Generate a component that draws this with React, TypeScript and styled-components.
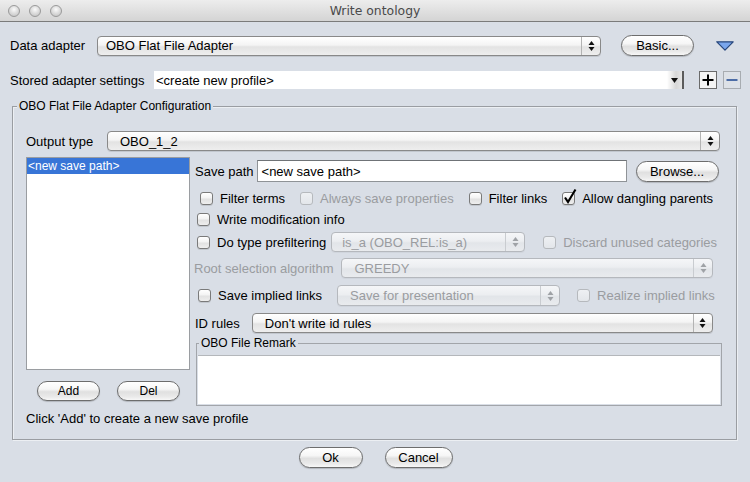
import React from 'react';
import styled, { createGlobalStyle } from 'styled-components';

const BG = '#d9dee6';

const Global = createGlobalStyle`
  html, body { margin: 0; padding: 0; background: ${BG}; }
  body { font-family: "Liberation Sans", Arial, sans-serif; font-size: 13px; }
`;

const Window = styled.div`
  width: 750px;
  height: 482px;
  background: ${BG};
  overflow: hidden;
  display: flex;
  flex-direction: column;
  color: #000;
  font-family: "Liberation Sans", Arial, sans-serif;
  font-size: 13px;
`;

const TitleBar = styled.div`
  flex: none;
  height: 21px;
  border-bottom: 1px solid #7b7b7b;
  background: linear-gradient(#ededed, #d4d4d4);
  display: grid;
  grid-template-columns: 1fr auto 1fr;
  align-items: center;
`;

const Lights = styled.div`
  display: flex;
  gap: 9px;
  padding-left: 8px;
`;

const Light = styled.span`
  width: 12px;
  height: 12px;
  box-sizing: border-box;
  border-radius: 50%;
  border: 1px solid #9a9a9a;
  background: radial-gradient(circle at 50% 35%, #fbfbfb 0%, #dedede 45%, #bdbdbd 100%);
`;

const Title = styled.div`
  font-family: "DejaVu Sans", sans-serif;
  font-size: 12.4px;
  color: #4a4a4a;
`;

const Row = styled.div<{ $mt: number; $h: number; $pl?: number }>`
  flex: none;
  display: flex;
  align-items: center;
  margin-top: ${p => p.$mt}px;
  height: ${p => p.$h}px;
  padding-left: ${p => p.$pl ?? 0}px;
`;

const Label = styled.span<{ $w?: number; $disabled?: boolean }>`
  flex: none;
  white-space: nowrap;
  ${p => (p.$w ? `width: ${p.$w}px;` : '')}
  color: ${p => (p.$disabled ? '#9a9ca0' : '#000')};
`;

const ComboBox = styled.div<{ $w?: number; $ml?: number; $mr?: number; $h?: number; $disabled?: boolean }>`
  display: flex;
  align-items: stretch;
  box-sizing: border-box;
  flex: ${p => (p.$w ? 'none' : '1')};
  width: ${p => (p.$w ? `${p.$w}px` : 'auto')};
  height: ${p => p.$h ?? 20}px;
  margin-left: ${p => p.$ml ?? 0}px;
  margin-right: ${p => p.$mr ?? 0}px;
  border: 1px solid ${p => (p.$disabled ? '#b5b8bd' : '#898989')};
  border-radius: 4px;
  background: ${p =>
    p.$disabled
      ? 'linear-gradient(#f5f6f8, #eceef1 45%, #e2e5e9 55%, #e9ebee)'
      : 'linear-gradient(#ffffff, #f4f4f4 45%, #e3e3e3 55%, #eeeeee)'};
  box-shadow: 0 1px 0 rgba(0, 0, 0, ${p => (p.$disabled ? 0.04 : 0.1)});
  color: ${p => (p.$disabled ? '#9a9ca0' : '#000')};
`;

const ComboValue = styled.span<{ $pl: number }>`
  flex: 1;
  display: flex;
  align-items: center;
  padding-left: ${p => p.$pl}px;
  white-space: nowrap;
  overflow: hidden;
`;

const Stepper = styled.span<{ $disabled?: boolean }>`
  flex: none;
  width: 18px;
  border-left: 1px solid ${p => (p.$disabled ? '#c9ccd0' : '#b3b3b3')};
  display: flex;
  align-items: center;
  justify-content: center;
`;

const StepArrows = ({ color }: { color: string }) => (
  <svg width="7" height="12" viewBox="0 0 7 12">
    <path d="M3.5 1 L6.5 5 L0.5 5 Z M0.5 7 L6.5 7 L3.5 11 Z" fill={color} />
  </svg>
);

const Combo = ({
  value,
  w,
  ml,
  mr,
  h,
  pl = 12,
  disabled,
}: {
  value: string;
  w?: number;
  ml?: number;
  mr?: number;
  h?: number;
  pl?: number;
  disabled?: boolean;
}) => (
  <ComboBox $w={w} $ml={ml} $mr={mr} $h={h} $disabled={disabled}>
    <ComboValue $pl={pl}>{value}</ComboValue>
    <Stepper $disabled={disabled}>
      <StepArrows color={disabled ? '#9fa2a6' : '#111'} />
    </Stepper>
  </ComboBox>
);

const PillButton = styled.button<{ $w: number; $h?: number; $ml?: number; $fs?: number }>`
  flex: none;
  width: ${p => p.$w}px;
  height: ${p => p.$h ?? 21}px;
  margin-left: ${p => p.$ml ?? 0}px;
  box-sizing: border-box;
  padding: 0;
  border: 1px solid #6d6d6d;
  border-radius: 11px;
  background: linear-gradient(#ffffff 0%, #f6f6f6 40%, #e0e0e0 55%, #e9e9e9 80%, #f7f7f7 100%);
  box-shadow: 0 1px 1px rgba(0, 0, 0, 0.18);
  font-family: "Liberation Sans", Arial, sans-serif;
  font-size: ${p => p.$fs ?? 13}px;
  color: #000;
`;

const TextField = styled.div<{ $w: number; $ml?: number }>`
  flex: none;
  width: ${p => p.$w}px;
  height: 22px;
  margin-left: ${p => p.$ml ?? 0}px;
  box-sizing: border-box;
  background: #fff;
  border: 1px solid #8f9397;
  border-top-color: #6f7377;
  display: flex;
  align-items: center;
  padding-left: 4px;
  white-space: nowrap;
`;

const StoredField = styled.div`
  flex: none;
  width: 530px;
  height: 18px;
  background: #fff;
  display: flex;
  align-items: stretch;
`;

const StoredValue = styled.span`
  flex: 1;
  display: flex;
  align-items: center;
  padding-left: 2px;
  white-space: nowrap;
`;

const DropButton = styled.span`
  flex: none;
  width: 15px;
  border-right: 2px solid #5c5c5c;
  background: linear-gradient(to right, #ffffff, #d7d7d7 60%, #e6e6e6);
  display: flex;
  align-items: center;
  justify-content: center;
`;

const SquareButton = styled.span<{ $kind: 'add' | 'remove'; $ml: number }>`
  flex: none;
  width: 18px;
  height: 18px;
  margin-left: ${p => p.$ml}px;
  box-sizing: border-box;
  border: 1px solid ${p => (p.$kind === 'add' ? '#6b6b6b' : '#a8acb1')};
  background: ${p => (p.$kind === 'add' ? '#f4f4f4' : '#dde1e7')};
  display: flex;
  align-items: center;
  justify-content: center;
`;

const Disclosure = styled.svg`
  flex: none;
  margin-left: 22px;
`;

const Group = styled.div`
  position: relative;
  flex: none;
  margin: 17px 0 0 12px;
  width: 725px;
  height: 334px;
  box-sizing: border-box;
  border: 1px solid #9a9da2;
  box-shadow: inset 1px 1px 0 rgba(255, 255, 255, 0.5), 1px 1px 0 rgba(255, 255, 255, 0.5);
  padding: 0 14px 0 13px;
  display: flex;
  flex-direction: column;
`;

const Legend = styled.span<{ $left: number }>`
  position: absolute;
  top: -8px;
  left: ${p => p.$left}px;
  padding: 0 2px;
  background: ${BG};
  font-size: 12px;
  line-height: 14px;
  white-space: nowrap;
`;

const MainArea = styled.div`
  flex: none;
  display: flex;
  align-items: flex-start;
  margin-top: 6px;
`;

const LeftCol = styled.div`
  flex: none;
  width: 164px;
  display: flex;
  flex-direction: column;
`;

const List = styled.div`
  height: 213px;
  box-sizing: border-box;
  background: #fff;
  border: 1px solid #9a9da1;
`;

const ListItem = styled.div<{ $selected?: boolean }>`
  height: 16px;
  line-height: 16px;
  padding-left: 1px;
  font-size: 12px;
  background: ${p => (p.$selected ? '#3875d7' : 'transparent')};
  color: ${p => (p.$selected ? '#fff' : '#000')};
`;

const RightCol = styled.div`
  flex: none;
  width: 528px;
  margin-left: 4px;
  display: flex;
  flex-direction: column;
`;

const CheckItem = styled.span<{ $ml?: number; $disabled?: boolean }>`
  flex: none;
  display: inline-flex;
  align-items: center;
  gap: 7px;
  margin-left: ${p => p.$ml ?? 0}px;
  white-space: nowrap;
  color: ${p => (p.$disabled ? '#9a9ca0' : '#000')};
`;

const Box = styled.span<{ $disabled?: boolean }>`
  position: relative;
  flex: none;
  width: 13px;
  height: 13px;
  box-sizing: border-box;
  border-radius: 3px;
  border: 1px solid ${p => (p.$disabled ? '#b6b9bd' : '#7a7a7a')};
  background: ${p =>
    p.$disabled
      ? 'linear-gradient(#eef0f3, #e3e6ea)'
      : 'linear-gradient(#ffffff, #f3f3f3 45%, #e2e2e2 55%, #eeeeee)'};
  box-shadow: ${p => (p.$disabled ? 'none' : '0 1px 0 rgba(0,0,0,0.1)')};
`;

const Tick = styled.svg`
  position: absolute;
  left: 0px;
  top: -5px;
  overflow: visible;
`;

const Check = ({
  label,
  checked,
  disabled,
  ml,
}: {
  label: string;
  checked?: boolean;
  disabled?: boolean;
  ml?: number;
}) => (
  <CheckItem $ml={ml} $disabled={disabled}>
    <Box $disabled={disabled}>
      {checked && (
        <Tick width="14" height="16" viewBox="0 0 14 16">
          <path d="M2 9.5 L5 14 L12.5 1.5" stroke="#000" strokeWidth="2.1" fill="none" strokeLinejoin="miter" />
        </Tick>
      )}
    </Box>
    {label}
  </CheckItem>
);

const Remark = styled.div`
  position: relative;
  flex: none;
  margin-top: 10px;
  margin-left: 2px;
  width: 526px;
  height: 63px;
  box-sizing: border-box;
  border: 1px solid #a2a5aa;
  padding: 11px 1px 1px 1px;
  display: flex;
`;

const RemarkArea = styled.div`
  flex: 1;
  background: #fff;
  border-top: 1px solid #b4b7bb;
`;

const ButtonRow = styled.div`
  flex: none;
  display: flex;
  align-items: center;
  height: 20px;
  margin-top: 11px;
`;

const Hint = styled.div`
  flex: none;
  margin-top: 5px;
  line-height: 16px;
  white-space: nowrap;
`;

const Footer = styled.div`
  flex: none;
  display: flex;
  justify-content: center;
  gap: 22px;
  margin-top: 7px;
  padding-left: 1px;
`;

export default function App() {
  return (
    <>
      <Global />
      <Window>
        <TitleBar>
          <Lights>
            <Light />
            <Light />
            <Light />
          </Lights>
          <Title>Write ontology</Title>
          <span />
        </TitleBar>

        <Row $mt={13} $h={21} $pl={10}>
          <Label $w={87}>Data adapter</Label>
          <Combo value="OBO Flat File Adapter" w={504} pl={8} />
          <PillButton $w={73} $ml={20}>Basic...</PillButton>
          <Disclosure width="18" height="10" viewBox="0 0 18 10">
            <path d="M0.8 0.8 L17.2 0.8 L9 9.2 Z" fill="#7aa6ec" stroke="#27467c" strokeWidth="1.2" strokeLinejoin="round" />
          </Disclosure>
        </Row>

        <Row $mt={15} $h={18} $pl={10}>
          <Label $w={144}>Stored adapter settings</Label>
          <StoredField>
            <StoredValue>&lt;create new profile&gt;</StoredValue>
            <DropButton>
              <svg width="7" height="5" viewBox="0 0 7 5">
                <path d="M0 0 L7 0 L3.5 5 Z" fill="#111" />
              </svg>
            </DropButton>
          </StoredField>
          <SquareButton $kind="add" $ml={15}>
            <svg width="12" height="12" viewBox="0 0 12 12">
              <path d="M6 0.5 V11.5 M0.5 6 H11.5" stroke="#000" strokeWidth="2" />
            </svg>
          </SquareButton>
          <SquareButton $kind="remove" $ml={6}>
            <svg width="12" height="12" viewBox="0 0 12 12">
              <path d="M0.5 6 H11.5" stroke="#4c6ca6" strokeWidth="2" />
            </svg>
          </SquareButton>
        </Row>

        <Group>
          <Legend $left={4}>OBO Flat File Adapter Configuration</Legend>

          <Row $mt={24} $h={20}>
            <Label $w={81}>Output type</Label>
            <Combo value="OBO_1_2" mr={2} />
          </Row>

          <MainArea>
            <LeftCol>
              <List>
                <ListItem $selected>&lt;new save path&gt;</ListItem>
              </List>
              <ButtonRow>
                <PillButton $w={63} $h={20} $ml={11} $fs={12}>Add</PillButton>
                <PillButton $w={63} $h={20} $ml={17} $fs={12}>Del</PillButton>
              </ButtonRow>
            </LeftCol>

            <RightCol>
              <Row $mt={3} $h={22} $pl={1}>
                <Label>Save path</Label>
                <TextField $w={370} $ml={3}>&lt;new save path&gt;</TextField>
                <PillButton $w={83} $ml={9}>Browse...</PillButton>
              </Row>

              <Row $mt={8} $h={16} $pl={6}>
                <Check label="Filter terms" />
                <Check label="Always save properties" disabled ml={15} />
                <Check label="Filter links" ml={15} />
                <Check label="Allow dangling parents" checked ml={15} />
              </Row>

              <Row $mt={5} $h={16} $pl={3}>
                <Check label="Write modification info" />
              </Row>

              <Row $mt={5} $h={20} $pl={3}>
                <Check label="Do type prefiltering" />
                <Combo value="is_a (OBO_REL:is_a)" w={194} ml={5} pl={10} disabled />
                <Check label="Discard unused categories" disabled ml={18} />
              </Row>

              <Row $mt={6} $h={20}>
                <Label $disabled>Root selection algorithm</Label>
                <Combo value="GREEDY" w={372} ml={8} disabled />
              </Row>

              <Row $mt={7} $h={21} $pl={4}>
                <Check label="Save implied links" />
                <Combo value="Save for presentation" w={223} ml={15} h={21} pl={12} disabled />
                <Check label="Realize implied links" disabled ml={17} />
              </Row>

              <Row $mt={7} $h={20} $pl={1}>
                <Label>ID rules</Label>
                <Combo value="Don't write id rules" w={461} ml={12} />
              </Row>

              <Remark>
                <Legend $left={2}>OBO File Remark</Legend>
                <RemarkArea />
              </Remark>
            </RightCol>
          </MainArea>

          <Hint>Click 'Add' to create a new save profile</Hint>
        </Group>

        <Footer>
          <PillButton $w={64}>Ok</PillButton>
          <PillButton $w={68}>Cancel</PillButton>
        </Footer>
      </Window>
    </>
  );
}
